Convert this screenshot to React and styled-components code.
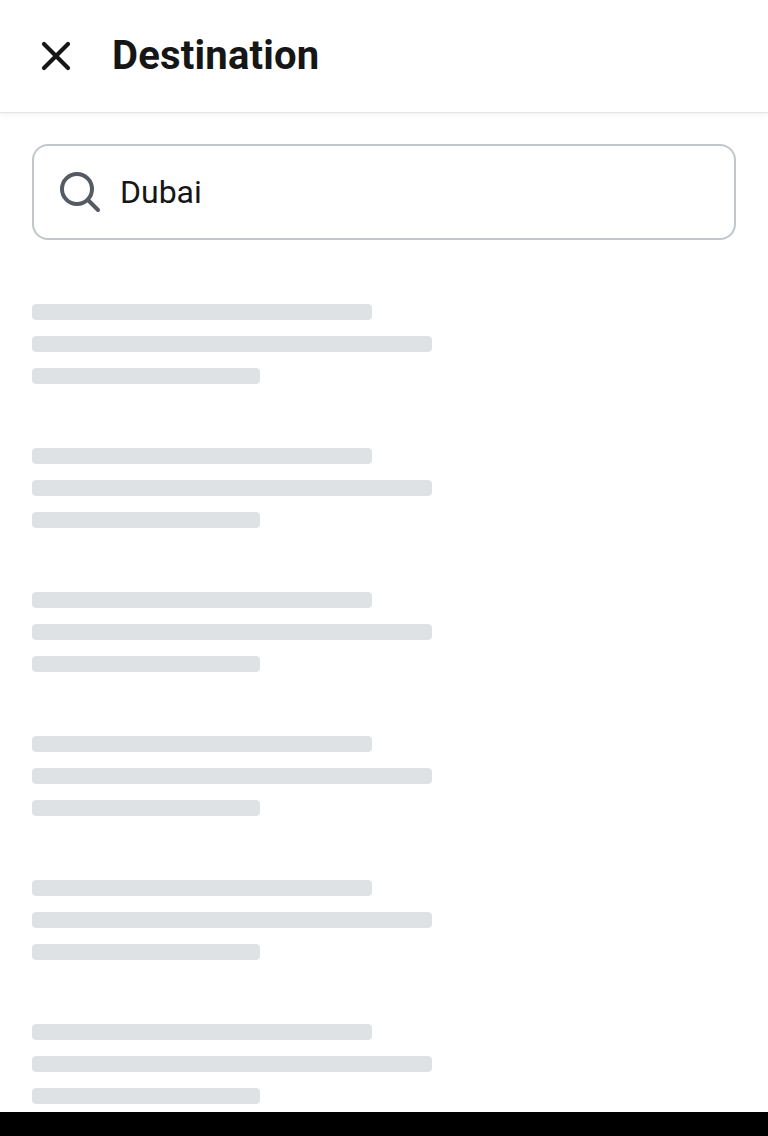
import React from 'react';
import styled, { createGlobalStyle } from 'styled-components';

const GlobalStyle = createGlobalStyle`
  * { box-sizing: border-box; }
  body { margin: 0; background: #fff; font-family: Roboto, sans-serif; color: #161616; overflow: hidden; }
`;

const Screen = styled.div`
  display: flex;
  flex-direction: column;
  height: 1136px;
  background: #fff;
`;

const Header = styled.header`
  display: flex;
  align-items: center;
  flex: none;
  height: 112px;
  padding: 0 32px;
  box-shadow: 0 1px 0 #e4e5e5, 0 2px 4px rgba(0, 0, 0, 0.07);
`;

const CloseButton = styled.button`
  display: flex;
  width: 48px;
  height: 48px;
  padding: 0;
  border: 0;
  background: none;
  color: #161616;
`;

const Title = styled.h1`
  margin: 0 0 0 32px;
  font-size: 40px;
  line-height: 48px;
  font-weight: 700;
  letter-spacing: 0.2px;
`;

const Content = styled.main`
  flex: 1;
  min-height: 0;
  padding: 32px 32px 0;
`;

const SearchField = styled.label`
  display: flex;
  align-items: center;
  height: 96px;
  padding: 0 22px;
  border: 2px solid #c0c6ca;
  border-radius: 16px;
`;

const Query = styled.span`
  margin-left: 16px;
  font-size: 32px;
  line-height: 48px;
`;

const Results = styled.div`
  display: flex;
  flex-direction: column;
  gap: 64px;
  padding-top: 64px;
`;

const Placeholder = styled.div`
  display: flex;
  flex-direction: column;
  gap: 16px;
`;

const Line = styled.div`
  width: ${({ $width }) => $width}px;
  height: 16px;
  border-radius: 4px;
  background: #dee2e5;
`;

const BottomBar = styled.footer`
  flex: none;
  height: 24px;
  background: #000;
`;

export default function App() {
  return (
    <>
      <GlobalStyle />
      <Screen>
        <Header>
          <CloseButton aria-label="Close">
            <svg width="48" height="48" viewBox="0 0 48 48" fill="none" stroke="currentColor" strokeWidth="4.2" strokeLinecap="round">
              <path d="M12 12 36 36M36 12 12 36" />
            </svg>
          </CloseButton>
          <Title>Destination</Title>
        </Header>
        <Content>
          <SearchField>
            <svg width="48" height="48" viewBox="0 0 48 48" fill="none" stroke="#555a63" strokeWidth="4" strokeLinecap="round">
              <circle cx="21" cy="21" r="15" />
              <path d="m32 32 10 10" />
            </svg>
            <Query>Dubai</Query>
          </SearchField>
          <Results>
            {Array.from({ length: 6 }, (_, i) => (
              <Placeholder key={i}>
                <Line $width={340} />
                <Line $width={400} />
                <Line $width={228} />
              </Placeholder>
            ))}
          </Results>
        </Content>
        <BottomBar />
      </Screen>
    </>
  );
}
